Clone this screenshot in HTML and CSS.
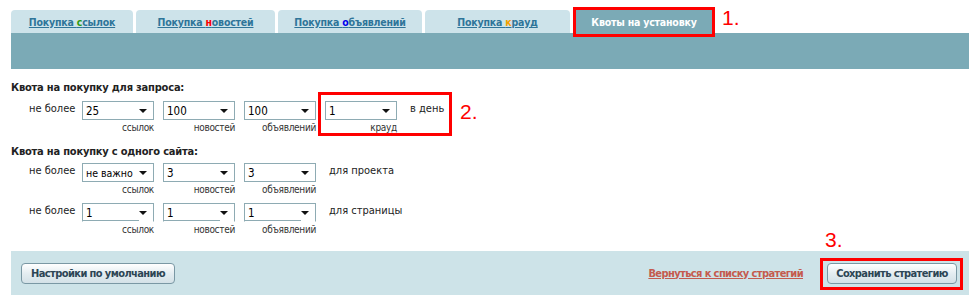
FILE: index.html
```html
<!DOCTYPE html>
<html lang="ru">
<head>
  <meta charset="UTF-8">
  <title>Квоты на установку</title>
  <link rel="stylesheet" href="styles.css">
</head>
<body>
<div class="page">
  <div class="tabs">
    <a class="tab tab-links" href="#">Покупка <b class="c-green">с</b>сылок</a>
    <a class="tab tab-news" href="#">Покупка <b class="c-red">н</b>овостей</a>
    <a class="tab tab-ads" href="#">Покупка <b class="c-blue">о</b>бъявлений</a>
    <a class="tab tab-crowd" href="#">Покупка <b class="c-orange">к</b>рауд</a>
    <div class="tab tab-active">Квоты на установку</div>
  </div>
  <div class="bar"></div>

  <div class="section">
    <div class="section-title">Квота на покупку для запроса:</div>
    <div class="row">
      <span class="row-label">не более</span>
      <div class="field"><div class="sel">25</div><div class="cap">ссылок</div></div>
      <div class="field"><div class="sel">100</div><div class="cap">новостей</div></div>
      <div class="field"><div class="sel">100</div><div class="cap">объявлений</div></div>
      <div class="field"><div class="sel">1</div><div class="cap">крауд</div></div>
      <span class="unit">в день</span>
    </div>
  </div>

  <div class="section">
    <div class="section-title">Квота на покупку с одного сайта:</div>
    <div class="row">
      <span class="row-label">не более</span>
      <div class="field"><div class="sel sel-small">не важно</div><div class="cap">ссылок</div></div>
      <div class="field"><div class="sel">3</div><div class="cap">новостей</div></div>
      <div class="field"><div class="sel">3</div><div class="cap">объявлений</div></div>
      <span class="unit">для проекта</span>
    </div>
    <div class="row">
      <span class="row-label">не более</span>
      <div class="field"><div class="sel sel-cut">1</div><div class="cap">ссылок</div></div>
      <div class="field"><div class="sel sel-cut">1</div><div class="cap">новостей</div></div>
      <div class="field"><div class="sel sel-cut">1</div><div class="cap">объявлений</div></div>
      <span class="unit">для страницы</span>
    </div>
  </div>

  <div class="footer">
    <button class="btn">Настройки по умолчанию</button>
    <div class="footer-right">
      <a class="back-link" href="#">Вернуться к списку стратегий</a>
      <button class="btn btn-save">Сохранить стратегию</button>
    </div>
  </div>

  <!-- пометки поверх скриншота -->
  <div class="mark mark-1"></div>
  <div class="mark-num num-1">1.</div>
  <div class="mark mark-2"></div>
  <div class="mark-num num-2">2.</div>
  <div class="mark mark-3"></div>
  <div class="mark-num num-3">3.</div>
</div>
</body>
</html>
```

FILE: styles.css
```css
body {
  margin: 0;
  padding: 0;
  background: #fff;
  font-family: "DejaVu Sans Condensed", "DejaVu Sans", sans-serif;
  font-size: 11px;
  color: #222;
}
.page {
  position: relative;
  width: 958px;
  margin-left: 11px;
  padding-top: 10px;
}
.tabs {
  display: flex;
  gap: 3px;
  height: 23px;
}
.tab {
  display: block;
  height: 23px;
  line-height: 24px;
  text-align: center;
  background: #cde3ea;
  border-radius: 4px 4px 0 0;
  font-size: 10.5px;
  font-weight: bold;
  letter-spacing: -0.2px;
  color: #2f7599;
  white-space: nowrap;
}
.tab b {
  font-weight: bold;
}
.tab-links { width: 122px; }
.tab-news { width: 139px; }
.tab-ads { width: 144px; }
.tab-crowd { width: 145px; margin-right: 3px; }
.tab-active {
  width: 136px;
  background: #7baab6;
  color: #fff;
  border-radius: 0;
}
.c-green { color: #2e9a14; }
.c-red { color: #ff0000; }
.c-blue { color: #0000ee; }
.c-orange { color: #f2a100; }

.bar {
  height: 36px;
  background: #7baab6;
}

.section {
  padding-top: 12px;
}
.section + .section {
  padding-top: 4px;
}
.section-title {
  font-size: 11px;
  font-weight: bold;
  letter-spacing: -0.2px;
  line-height: 13px;
  color: #222;
  margin-bottom: 7px;
}
.section + .section .section-title {
  margin-bottom: 5px;
}
.row {
  display: flex;
  align-items: flex-start;
  gap: 9px;
  padding-left: 18px;
  margin-bottom: 7px;
}
.row-label {
  width: 44px;
  line-height: 16px;
  white-space: nowrap;
}
.field {
  width: 72px;
}
.sel {
  position: relative;
  height: 19px;
  box-sizing: border-box;
  border: 1px solid #8eabb3;
  padding-left: 3px;
  line-height: 18px;
  font-size: 11.5px;
  color: #000;
}
.sel::after {
  content: "";
  position: absolute;
  right: 6px;
  top: 7px;
  border-left: 4px solid transparent;
  border-right: 4px solid transparent;
  border-top: 4px solid #111;
}
.sel-small {
  font-size: 10.5px;
}
.sel-cut {
  border-bottom-color: transparent;
  background: linear-gradient(#8eabb3, #8eabb3) left bottom / 56px 1px no-repeat;
}
.cap {
  text-align: right;
  font-size: 10px;
  letter-spacing: -0.3px;
  line-height: 12px;
  margin-top: 2px;
  color: #333;
  white-space: nowrap;
}
.unit {
  margin-left: 4px;
  line-height: 16px;
  white-space: nowrap;
}

.footer {
  display: flex;
  align-items: center;
  justify-content: space-between;
  height: 44px;
  margin-top: 15px;
  padding: 0 12px 0 10px;
  background: #cde3e8;
}
.footer-right {
  display: flex;
  align-items: center;
  gap: 24px;
}
.btn {
  height: 21px;
  width: 154px;
  padding: 0;
  border: 1px solid #7a98a4;
  border-radius: 4px;
  background: linear-gradient(#ffffff, #e4edf1 50%, #d3e1e7);
  font-family: "DejaVu Sans Condensed", "DejaVu Sans", sans-serif;
  font-size: 11px;
  font-weight: bold;
  letter-spacing: -0.6px;
  color: #2c4554;
  white-space: nowrap;
  cursor: pointer;
}
.btn-save {
  width: 130px;
}
.back-link {
  font-size: 11px;
  font-weight: bold;
  letter-spacing: -0.6px;
  color: #c45a4e;
  white-space: nowrap;
}

.mark {
  position: absolute;
  border: 3px solid #f00;
  box-sizing: border-box;
}
.mark-1 { left: 562px; top: 7px; width: 142px; height: 30px; }
.mark-2 { left: 307px; top: 92px; width: 134px; height: 44px; }
.mark-3 { left: 809px; top: 258px; width: 143px; height: 32px; }
.mark-num {
  position: absolute;
  color: #f00;
  font-family: "Liberation Sans", sans-serif;
  font-size: 21px;
  line-height: 21px;
}
.num-1 { left: 711px; top: 7px; }
.num-2 { left: 449px; top: 101px; }
.num-3 { left: 814px; top: 229px; }
```
